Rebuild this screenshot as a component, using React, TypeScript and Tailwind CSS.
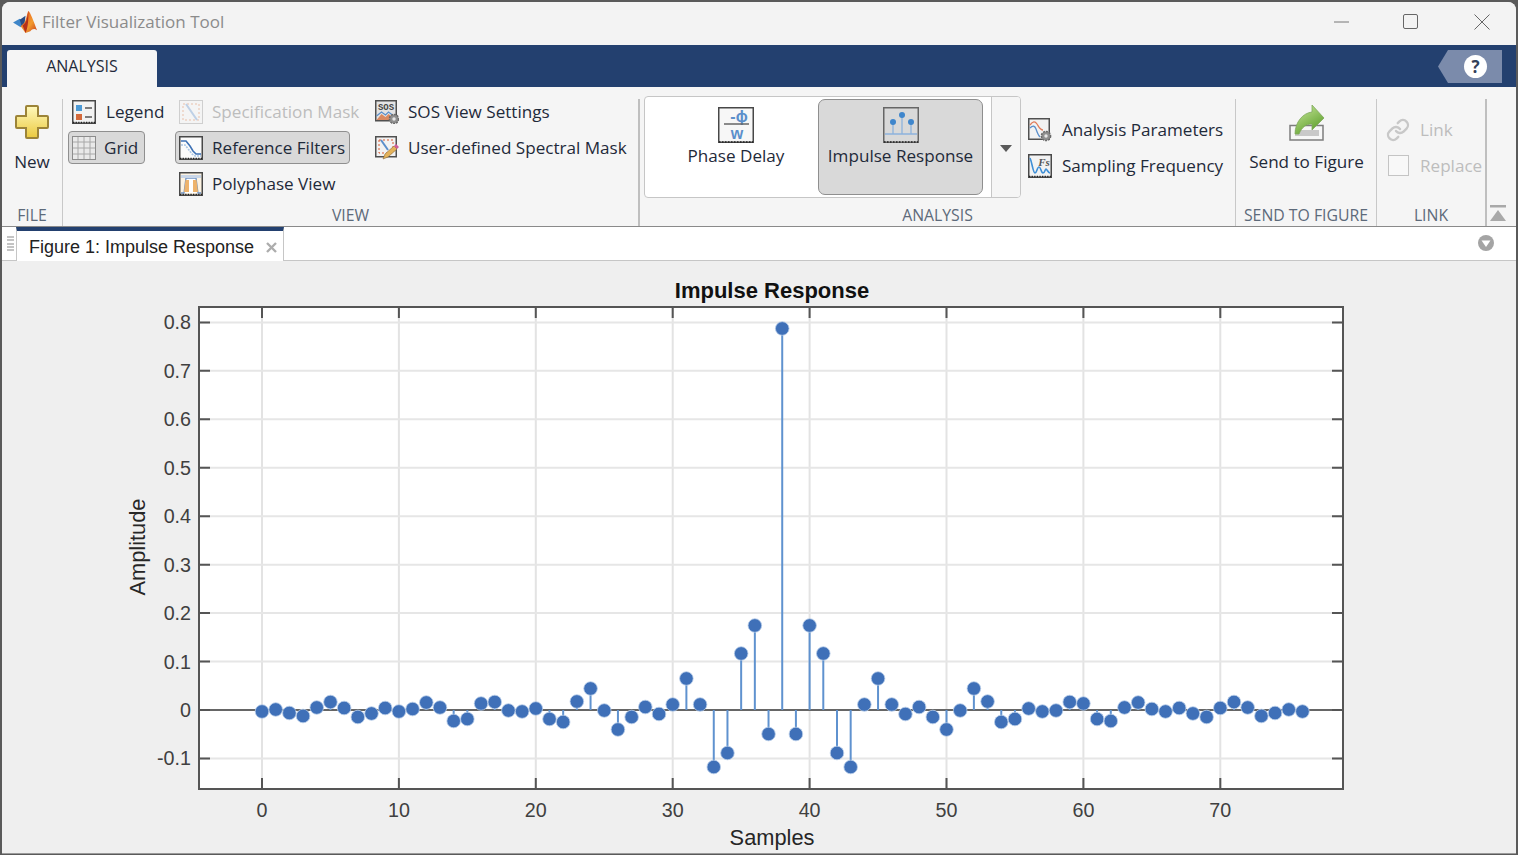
// Filter Visualization Tool window: title bar, ribbon, document tab and the impulse response plot.
import type { ReactNode } from "react";
import { Link } from "lucide-react";

// ── Plot data: pixel height of each sample's marker, the filter is symmetric around n = 38 ──
const half = [
  711.5, 709.5, 713, 716, 707.5, 702, 708, 717, 713.5, 708, 711.5, 709, 702.5, 707.5, 721, 719,
  703.5, 702, 710.5, 711.5, 708.5, 719, 722, 701.5, 688.5, 710.5, 729.5, 717, 707, 714, 704.5,
  678.5, 704.5, 767, 753, 653.5, 625.5, 734, 328.5,
];
const samples = [...half, ...half.slice(0, 38).reverse()];
const xOf = (n: number) => 262 + n * 13.69;
const yOf = (v: number) => 710 - v * 484.5;
const xTicks = [0, 10, 20, 30, 40, 50, 60, 70];
const yTicks = [0.8, 0.7, 0.6, 0.5, 0.4, 0.3, 0.2, 0.1, 0, -0.1];

const ribbonFont = "font-['Open_Sans',sans-serif]";

// Small 24px ribbon icon with the dark frame and dotted bottom edge MATLAB uses for plots
function PlotFrame({ children, fill = "#f4f4f4" }: { children?: ReactNode; fill?: string }) {
  return (
    <svg width="24" height="24" viewBox="0 0 24 24" className="shrink-0">
      <rect x="0.75" y="0.75" width="22.5" height="22.5" fill={fill} stroke="#484848" strokeWidth="1.5" />
      {children}
      <line x1="1" y1="22.5" x2="23" y2="22.5" stroke="#222" strokeWidth="1.5" strokeDasharray="1.3 1.3" />
    </svg>
  );
}

function Gear({ cx, cy }: { cx: number; cy: number }) {
  return (
    <g>
      <circle cx={cx} cy={cy} r="4.6" fill="#8f8f8f" stroke="#6a6a6a" strokeDasharray="2 1" strokeWidth="1.5" />
      <circle cx={cx} cy={cy} r="1.7" fill="#e6e6e6" />
    </g>
  );
}

const LegendIcon = () => (
  <PlotFrame fill="#f2f2f2">
    <rect x="4" y="5" width="6" height="6" fill="#4c9ad6" />
    <rect x="4" y="14" width="6" height="6" fill="#d4693a" />
    <line x1="13" y1="8" x2="20" y2="8" stroke="#555" strokeWidth="1.5" />
    <line x1="13" y1="17" x2="20" y2="17" stroke="#555" strokeWidth="1.5" />
  </PlotFrame>
);

const GridIcon = () => (
  <svg width="24" height="24" viewBox="0 0 24 24" className="shrink-0">
    <rect x="0.5" y="0.5" width="23" height="23" fill="#e9e9e9" stroke="#8c8c8c" />
    <path d="M6 1v22M12 1v22M18 1v22M1 6h22M1 12h22M1 18h22" stroke="#a8a8a8" strokeWidth="1" fill="none" />
  </svg>
);

const SpecMaskIcon = () => (
  <svg width="24" height="24" viewBox="0 0 24 24" className="shrink-0" opacity="0.4">
    <rect x="0.5" y="0.5" width="23" height="23" fill="#f4f4f4" stroke="#999" />
    <rect x="4" y="4" width="16" height="16" fill="none" stroke="#d9703f" strokeDasharray="2 2" />
    <line x1="7" y1="4" x2="18" y2="20" stroke="#6d9bd1" strokeWidth="2" />
  </svg>
);

const RefFiltersIcon = () => (
  <PlotFrame fill="#fbfbfb">
    <path d="M2 5h5l4 5 3 5 3 3h5" fill="none" stroke="#3f72b5" strokeWidth="1.6" />
    <path d="M2 9h4l4 5 3 4 3 2h6" fill="none" stroke="#a9c4e2" strokeWidth="1.6" strokeDasharray="2 1" />
  </PlotFrame>
);

const PolyphaseIcon = () => (
  <PlotFrame fill="#fdf3e2">
    <path d="M2 21h3l2-15h10l2 15h3" fill="#fff" stroke="#6f93c4" strokeWidth="1.3" />
    <path d="M5 20l1.5-12H10v12zM14 20V8h3.5L19 20z" fill="#eeb36b" />
    <rect x="2" y="3" width="20" height="3" fill="#c9d6e8" />
  </PlotFrame>
);

const SosIcon = () => (
  <svg width="24" height="24" viewBox="0 0 24 24" className="shrink-0">
    <rect x="0.75" y="0.75" width="20.5" height="20" fill="#e4e4e4" stroke="#505050" strokeWidth="1.5" />
    <text x="11" y="10" textAnchor="middle" fontSize="9" fontWeight="700" fill="#444" fontFamily="'Liberation Mono',monospace">SOS</text>
    <path d="M1.5 20l5-6 4 3 3-3 4 3v3z" fill="#d98a62" />
    <path d="M1.5 16l5-4 4 3 3-3 4 3" fill="none" stroke="#5b8fcb" strokeWidth="1.3" />
    <Gear cx={19} cy={19} />
  </svg>
);

const UserMaskIcon = () => (
  <svg width="24" height="24" viewBox="0 0 24 24" className="shrink-0">
    <rect x="0.75" y="0.75" width="20.5" height="20" fill="#f2f2f2" stroke="#505050" strokeWidth="1.5" />
    <rect x="4" y="4" width="14" height="13" fill="none" stroke="#d9582f" strokeDasharray="2 2" />
    <line x1="6" y1="4" x2="13" y2="14" stroke="#5b8fcb" strokeWidth="2" />
    <path d="M8 23l2-5 9-8 3 3-9 8z" fill="#e4b25a" stroke="#8a6a3a" strokeWidth="0.6" />
    <path d="M19 10l2-2 3 3-2 2z" fill="#d05c9a" />
  </svg>
);

const AnalysisParamsIcon = () => (
  <svg width="24" height="24" viewBox="0 0 24 24" className="shrink-0">
    <rect x="0.75" y="0.75" width="20.5" height="20.5" fill="#f2f2f2" stroke="#505050" strokeWidth="1.5" />
    <path d="M2 7c3-4 5-4 7-1s3 6 6 6" fill="none" stroke="#e07b5a" strokeWidth="1.3" />
    <path d="M2 10c3-3 5-2 6 1s2 6 4 8" fill="none" stroke="#5b8fcb" strokeWidth="1.3" />
    <Gear cx={18} cy={18} />
  </svg>
);

const SamplingIcon = () => (
  <PlotFrame fill="#f2f2f2">
    <text x="16" y="12" textAnchor="middle" fontSize="11" fontWeight="700" fontStyle="italic" fill="#555" fontFamily="'Liberation Serif',serif">Fs</text>
    <path d="M2 4c2 4 3 15 5 15s2-6 4-6 2 6 4 6 2-4 3-4 2 4 4 4" fill="none" stroke="#3f8fd6" strokeWidth="1.6" />
  </PlotFrame>
);

const PhaseDelayIcon = () => (
  <svg width="36" height="36" viewBox="0 0 36 36" className="shrink-0">
    <rect x="0.75" y="0.75" width="34.5" height="34.5" fill="#f7f7f7" stroke="#484848" strokeWidth="1.5" />
    <text x="21" y="15" textAnchor="middle" fontSize="16" fontWeight="700" fill="#5b8fcb" fontFamily="'Liberation Sans',sans-serif">-ϕ</text>
    <line x1="6" y1="17" x2="31" y2="17" stroke="#666" strokeWidth="1.5" />
    <text x="19" y="32" textAnchor="middle" fontSize="16" fontWeight="700" fill="#5b8fcb" fontFamily="'Liberation Sans',sans-serif">w</text>
    <line x1="1" y1="35" x2="35" y2="35" stroke="#222" strokeWidth="1.5" strokeDasharray="1.5 1.5" />
  </svg>
);

const ImpulseIcon = () => (
  <svg width="36" height="36" viewBox="0 0 36 36" className="shrink-0">
    <rect x="0.75" y="0.75" width="34.5" height="34.5" fill="#d9d9d9" stroke="#666" strokeWidth="1.5" />
    <line x1="2" y1="27" x2="34" y2="27" stroke="#8db2dc" strokeWidth="1.3" />
    <path d="M10 15v12M19 8v19M28 15v12" stroke="#8db2dc" strokeWidth="1.3" />
    <circle cx="10" cy="15" r="3" fill="#3f86cc" />
    <circle cx="19" cy="8" r="3" fill="#3f86cc" />
    <circle cx="28" cy="15" r="3" fill="#3f86cc" />
    <line x1="1" y1="35" x2="35" y2="35" stroke="#222" strokeWidth="1.5" strokeDasharray="1.5 1.5" />
  </svg>
);

const NewIcon = () => (
  <svg width="36" height="36" viewBox="0 0 36 36">
    <defs>
      <linearGradient id="plusFill" x1="0" y1="0" x2="0" y2="1">
        <stop offset="0" stopColor="#fff9bd" />
        <stop offset="1" stopColor="#ebc93e" />
      </linearGradient>
    </defs>
    <path d="M13 2h10a1 1 0 0 1 1 1v9h9a1 1 0 0 1 1 1v10a1 1 0 0 1-1 1h-9v9a1 1 0 0 1-1 1H13a1 1 0 0 1-1-1v-9H3a1 1 0 0 1-1-1V13a1 1 0 0 1 1-1h9V3a1 1 0 0 1 1-1z" fill="url(#plusFill)" stroke="#9c8438" strokeWidth="2" />
  </svg>
);

const SendIcon = () => (
  <svg width="36" height="36" viewBox="0 0 36 36">
    <defs>
      <linearGradient id="sendFill" x1="0" y1="0" x2="0.6" y2="1">
        <stop offset="0" stopColor="#cdeb9f" />
        <stop offset="1" stopColor="#5fa02e" />
      </linearGradient>
    </defs>
    <rect x="1" y="20.5" width="33" height="14.5" fill="#f7f7f7" stroke="#7d7d7d" strokeWidth="1.5" />
    <rect x="6" y="25" width="24" height="6" fill="#c9c9c9" />
    <path d="M6 29c0-12 8-21 17-22V0l12 13-12 12v-6c-6 0-10 3-13 10z" fill="url(#sendFill)" stroke="#7da85a" strokeWidth="0.8" />
  </svg>
);

const MatlabLogo = () => (
  <svg width="25" height="23" viewBox="0 0 26 24" className="shrink-0">
    <defs>
      <linearGradient id="peak" x1="0" y1="0" x2="1" y2="1">
        <stop offset="0" stopColor="#e8541f" />
        <stop offset="0.6" stopColor="#f29a2e" />
        <stop offset="1" stopColor="#c8391a" />
      </linearGradient>
    </defs>
    <path d="M0 12l8 5 4-5L7 8z" fill="#3f86c8" />
    <path d="M7 9l6-4-1 8-3 3z" fill="#2a4d86" />
    <path d="M16 0c2 1 6 12 9 20-3-2-5-1-7 1l-5 2-5-7 4-4c2-4 3-11 4-12z" fill="url(#peak)" />
    <path d="M16 0c-1 4-1 12-6 15l3 8c3-6 3-16 3-23z" fill="#b5301b" />
  </svg>
);

// A 33px tall ribbon row; `on` draws the pressed toggle look
function RibbonItem({ icon, label, on, disabled, gap = "gap-[9px]", width = "w-fit" }: { icon: ReactNode; label: string; on?: boolean; disabled?: boolean; gap?: string; width?: string }) {
  return (
    <div
      className={[
        "flex items-center h-[33px] pl-[3px] rounded-[4px] border whitespace-nowrap",
        gap,
        width,
        on ? "bg-[#d9d9d9] border-[#8f8f8f]" : "border-transparent",
        disabled ? "text-[#bdbdbd]" : "text-[#1f2a3a]",
      ].join(" ")}
    >
      {icon}
      <span>{label}</span>
    </div>
  );
}

function Section({ width, label, children }: { width: string; label: string; children: ReactNode }) {
  return (
    <div className={`flex flex-col shrink-0 ${width}`}>
      <div className="flex-1 min-h-0">{children}</div>
      <div className="h-[22px] leading-[22px] text-center text-[15.8px] text-[#5d6a7a] whitespace-nowrap">{label}</div>
    </div>
  );
}

function Separator({ thick }: { thick?: boolean }) {
  return <div className={`self-end h-[127px] shrink-0 ${thick ? "w-[2px] bg-[#bfbfbf]" : "w-px bg-[#c8c8c8]"}`} />;
}

function ImpulsePlot() {
  return (
    <svg viewBox="2 261 1514 592" className="block w-full h-full">
      <rect x="199" y="307" width="1144" height="482" fill="#fff" />

      {/* grid */}
      {xTicks.map((t) => (
        <line key={t} x1={xOf(t)} y1="308" x2={xOf(t)} y2="788" stroke="#e3e3e3" strokeWidth="2" />
      ))}
      {yTicks.map((t) => (
        <line key={t} x1="200" y1={yOf(t)} x2="1342" y2={yOf(t)} stroke="#e6e6e6" strokeWidth="2" />
      ))}

      {/* axes box and ticks */}
      <line x1="200" y1="710" x2="1342" y2="710" stroke="#666" strokeWidth="2" />
      <rect x="199" y="307" width="1144" height="482" fill="none" stroke="#555" strokeWidth="2" />
      {xTicks.map((t) => (
        <path key={t} d={`M${xOf(t)} 307v11M${xOf(t)} 789v-11`} stroke="#555" strokeWidth="2" />
      ))}
      {yTicks.map((t) => (
        <path key={t} d={`M199 ${yOf(t)}h11M1343 ${yOf(t)}h-11`} stroke="#555" strokeWidth="2" />
      ))}

      {/* stems and markers */}
      {samples.map((y, n) => (
        <line key={n} x1={xOf(n)} y1="710" x2={xOf(n)} y2={y} stroke="#5f92cf" strokeWidth="2" />
      ))}
      {samples.map((y, n) => (
        <circle key={n} cx={xOf(n)} cy={y} r="6.8" fill="#3f70b8" stroke="#b7cde8" strokeWidth="0.8" />
      ))}

      {/* labels */}
      <g fontFamily="'Liberation Sans',Arial,sans-serif" fill="#404040" fontSize="19.7">
        {xTicks.map((t) => (
          <text key={t} x={xOf(t)} y="817" textAnchor="middle">{t}</text>
        ))}
        {yTicks.map((t) => (
          <text key={t} x="191" y={yOf(t) + 7} textAnchor="end">{t}</text>
        ))}
        <text x="772" y="845" textAnchor="middle" fontSize="21.8" fill="#262626">Samples</text>
        <text transform="translate(145 547) rotate(-90)" textAnchor="middle" fontSize="21.8" fill="#262626">Amplitude</text>
        <text x="772" y="298" textAnchor="middle" fontSize="22" fontWeight="700" fill="#111">Impulse Response</text>
      </g>
    </svg>
  );
}

export default function App() {
  return (
    <div className="w-[1518px] h-[855px] overflow-hidden bg-[#5a5a5a] pt-[2px] px-[2px] pb-[1px]">
      <div className={`flex flex-col h-full rounded-t-[8px] overflow-hidden bg-[#efefef] ${ribbonFont}`}>

        {/* ── Title bar ── */}
        <div className="flex items-center h-[43px] shrink-0 bg-[#f3f3f3] pl-[11px] pb-[3px]">
          <MatlabLogo />
          <span className="ml-[4px] text-[17px] text-[#8b8b8b] whitespace-nowrap">Filter Visualization Tool</span>
          <div className="ml-auto flex items-center pr-[26px]">
            <svg width="16" height="16" viewBox="0 0 16 16" className="mr-[53px]"><line x1="0" y1="8" x2="15" y2="8" stroke="#777" /></svg>
            <svg width="16" height="16" viewBox="0 0 16 16" className="mr-[55px]"><rect x="0.5" y="0.5" width="14" height="14" rx="1.5" fill="none" stroke="#666" /></svg>
            <svg width="16" height="16" viewBox="0 0 16 16"><path d="M0.5 0.5l15 15M15.5 0.5l-15 15" stroke="#666" fill="none" /></svg>
          </div>
        </div>

        {/* ── Tab strip ── */}
        <div className="flex items-end h-[42px] shrink-0 bg-[#23406f] pl-[5px]">
          <div className="flex items-center justify-center w-[150px] h-[37px] pb-[5px] rounded-t-[3px] bg-[#f5f5f5] text-[16px] text-[#1f2a3a]">
            ANALYSIS
          </div>
          <div className="ml-auto mr-[14px] mb-[4px] flex items-center justify-end w-[64px] h-[33px] pr-[15px] bg-[#7b8bab] [clip-path:polygon(10px_0,100%_0,100%_100%,10px_100%,0_50%)]">
            <span className="flex items-center justify-center w-[23px] h-[23px] rounded-full bg-white text-[17px] font-bold text-[#33415a]">?</span>
          </div>
        </div>

        {/* ── Ribbon ── */}
        <div className="flex h-[140px] shrink-0 bg-[#f5f5f5] border-b border-[#8a8a8a] text-[17.1px]">
          <Section width="w-[60px]" label="FILE">
            <div className="flex flex-col items-center pt-[17px] text-[#1f2a3a]">
              <NewIcon />
              <span className="mt-[10px] leading-[24px]">New</span>
            </div>
          </Section>
          <Separator />

          <Section width="w-[575px]" label="VIEW">
            <div className="flex pt-[8px] pl-[5px]">
              <div className="flex flex-col gap-[3px] w-[107px] shrink-0">
                <RibbonItem icon={<LegendIcon />} label="Legend" gap="gap-[10px]" />
                <RibbonItem icon={<GridIcon />} label="Grid" on gap="gap-[8px]" width="w-[77px]" />
              </div>
              <div className="flex flex-col gap-[3px] w-[196px] shrink-0">
                <RibbonItem icon={<SpecMaskIcon />} label="Specification Mask" disabled />
                <RibbonItem icon={<RefFiltersIcon />} label="Reference Filters" on width="w-[175px]" />
                <RibbonItem icon={<PolyphaseIcon />} label="Polyphase View" />
              </div>
              <div className="flex flex-col gap-[3px] shrink-0">
                <RibbonItem icon={<SosIcon />} label="SOS View Settings" />
                <RibbonItem icon={<UserMaskIcon />} label="User-defined Spectral Mask" />
              </div>
            </div>
          </Section>
          <Separator thick />

          <Section width="w-[595px]" label="ANALYSIS">
            <div className="flex items-center pt-[9px] pl-[4px]">
              {/* gallery of analyses */}
              <div className="flex w-[377px] h-[102px] rounded-[4px] border border-[#c6c6c6] bg-white overflow-hidden">
                <div className="flex flex-col items-center w-[173px] pl-[9px] pt-[10px] text-[#1f2a3a]">
                  <PhaseDelayIcon />
                  <span className="mt-[1px] leading-[24px]">Phase Delay</span>
                </div>
                <div className="flex flex-col items-center w-[165px] mt-[2px] h-[96px] pt-[7px] rounded-[7px] border border-[#8f8f8f] bg-[#d9d9d9] text-[#1f2a3a]">
                  <ImpulseIcon />
                  <span className="mt-[1px] leading-[24px]">Impulse Response</span>
                </div>
                <div className="flex items-center justify-center ml-[8px] pt-[2px] flex-1 border-l border-[#c6c6c6] bg-[#f5f5f5]">
                  <svg width="12" height="7" viewBox="0 0 12 7"><path d="M0 0h12L6 7z" fill="#5a5a5a" /></svg>
                </div>
              </div>
              <div className="flex flex-col gap-[3px] ml-[3px] mt-[2px]">
                <RibbonItem icon={<AnalysisParamsIcon />} label="Analysis Parameters" gap="gap-[10px]" />
                <RibbonItem icon={<SamplingIcon />} label="Sampling Frequency" gap="gap-[10px]" />
              </div>
            </div>
          </Section>
          <Separator />

          <Section width="w-[140px]" label="SEND TO FIGURE">
            <div className="flex flex-col items-center pt-[18px] pl-[1px] text-[#1f2a3a]">
              <SendIcon />
              <span className="mt-[9px] leading-[24px]">Send to Figure</span>
            </div>
          </Section>
          <Separator />

          <Section width="w-[108px]" label="LINK">
            <div className="flex flex-col gap-[3px] pt-[26px] pl-[5px]">
              <RibbonItem icon={<Link size={24} color="#c8c8c8" strokeWidth={2.4} className="shrink-0" />} label="Link" disabled gap="gap-[10px]" />
              <RibbonItem
                icon={<span className="block w-[21px] h-[21px] mx-[2px] border border-[#c4c4c4] bg-[#f8f8f8]" />}
                label="Replace"
                disabled
              />
            </div>
          </Section>
          <Separator thick />

          <div className="flex flex-col items-center justify-end flex-1 pb-[5px] pr-[7px]">
            <svg width="16" height="16" viewBox="0 0 16 16">
              <rect x="0" y="0" width="16" height="2.5" fill="#a9a9a9" />
              <path d="M8 5l8 11H0z" fill="#a9a9a9" />
            </svg>
          </div>
        </div>

        {/* ── Document tab ── */}
        <div className="flex items-end h-[34px] shrink-0 bg-white border-b border-[#c6c6c6] pl-[5px] font-['Liberation_Sans',Arial,sans-serif]">
          <div className="flex flex-col justify-between w-[7px] h-[15px] mb-[9px] mr-[2px]">
            {[0, 1, 2, 3, 4].map((i) => <div key={i} className="h-[2px] bg-[#c4c4c4]" />)}
          </div>
          <div className="flex items-center w-[268px] h-[34px] -mb-px bg-white border-x border-[#c6c6c6] border-t-[4px] border-t-[#23406f] pl-[12px] pt-[2px]">
            <span className="text-[18px] text-[#222] whitespace-nowrap">Figure 1: Impulse Response</span>
            <svg width="11" height="11" viewBox="0 0 11 11" className="ml-[12px]"><path d="M1 1l9 9M10 1l-9 9" stroke="#adadad" strokeWidth="2.4" /></svg>
          </div>
          <svg width="16" height="16" viewBox="0 0 16 16" className="ml-auto mr-[22px] mb-[9px]">
            <circle cx="8" cy="8" r="8" fill="#a4a4a4" />
            <path d="M3.5 5.5h9L8 12z" fill="#fff" />
          </svg>
        </div>

        {/* ── Plot area ── */}
        <div className="flex-1 min-h-0 border-b border-[#9a9a9a]">
          <ImpulsePlot />
        </div>
      </div>
    </div>
  );
}
